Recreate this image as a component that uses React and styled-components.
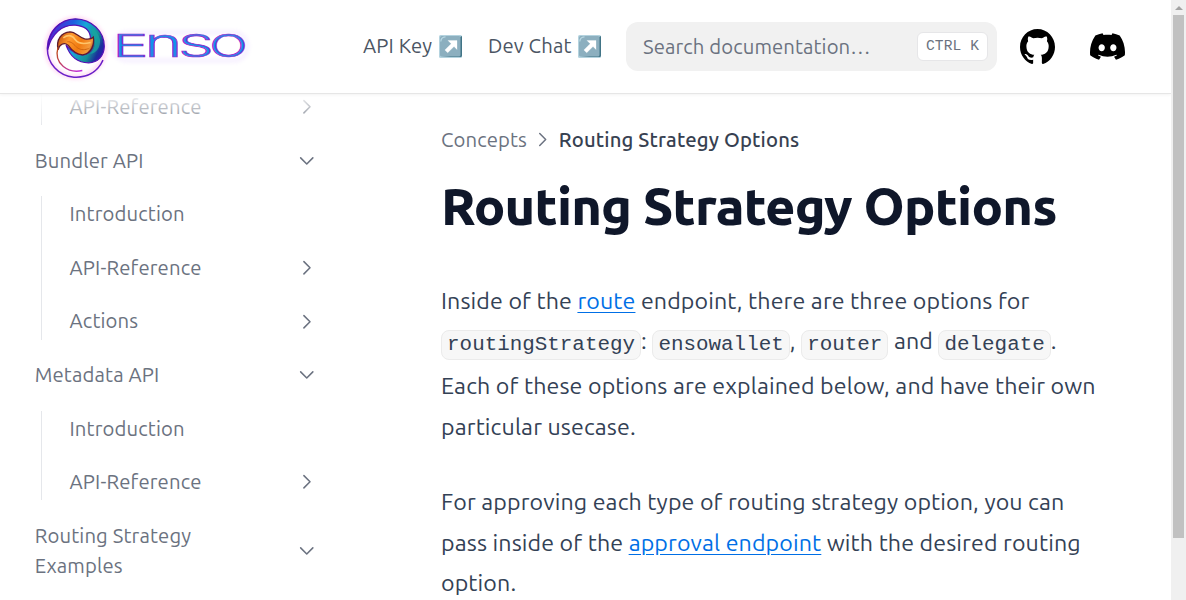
import React from "react";
import styled, { createGlobalStyle } from "styled-components";

const Global = createGlobalStyle`
  *, *::before, *::after { box-sizing: border-box; }
  body { margin: 0; background: #fff; overflow: hidden; font-family: Ubuntu, "Open Sans", "Noto Sans", sans-serif; }
  a { color: inherit; text-decoration: none; }
  p, h1 { margin: 0; }
`;

const Shell = styled.div`
  display: flex;
  width: 100%;
  height: 600px;
  overflow: hidden;
`;
const Page = styled.div`
  flex: 1;
  min-width: 0;
  display: flex;
  flex-direction: column;
`;
const Label = styled.span`
  white-space: nowrap;
`;

/* Header */
const Header = styled.header`
  flex: none;
  height: 93px;
  display: flex;
  align-items: center;
  padding-left: 34px;
  background: #fff;
  box-shadow: 0 1px 0 #e6e6e6, 0 2px 3px rgba(0, 0, 0, 0.05);
  z-index: 2;
`;
const LogoLink = styled.a`
  display: flex;
  width: 226px;
  margin-right: 103px;
`;
const NavLink = styled.a`
  display: flex;
  align-items: center;
  justify-content: space-between;
  width: ${(p) => p.$width}px;
  margin-right: ${(p) => p.$after}px;
  padding-bottom: 1px;
  font-size: 20.3px;
  letter-spacing: 0.14px;
  line-height: 30px;
  color: #4b5563;
  svg { flex: none; }
`;
const Search = styled.div`
  display: flex;
  align-items: center;
  justify-content: space-between;
  width: 371px;
  height: 49px;
  padding: 0 9px 0 17px;
  border-radius: 12px;
  background: #f1f1f1;
  color: #6b7280;
  font-size: 20.3px;
  letter-spacing: 0.1px;
`;
const Kbd = styled.kbd`
  display: flex;
  align-items: center;
  justify-content: center;
  width: 71px;
  height: 29px;
  padding-bottom: 2px;
  border: 1px solid #e6e6e8;
  border-radius: 6px;
  background: #fff;
  font: 500 14.6px "Liberation Mono", monospace;
  white-space: pre;
`;
const IconLink = styled.a`
  display: flex;
  margin-left: ${(p) => p.$before}px;
  color: #000;
`;

/* Sidebar */
const Body = styled.div`
  flex: 1;
  min-height: 0;
  display: flex;
  overflow: hidden;
`;
const Sidebar = styled.aside`
  position: relative;
  flex: none;
  width: 371px;
  padding: 0 47px 0 23.2px;
  color: #6b7280;
  font-size: 20.3px;
  letter-spacing: 0.15px;
  line-height: 30px;
  &::before {
    content: "";
    position: absolute;
    z-index: 1;
    inset: 0 0 auto 0;
    height: 34px;
    background: linear-gradient(#fff, rgba(255, 255, 255, 0));
  }
`;
const Menu = styled.ul`
  list-style: none;
  margin: -15.7px 0 0;
  padding: 0;
  display: flex;
  flex-direction: column;
  gap: 5.85px;
`;
const SubMenu = styled(Menu)`
  position: relative;
  margin: 5.85px 0 0 17.5px;
  padding-left: 17.3px;
  &::before {
    content: "";
    position: absolute;
    left: 0;
    top: 5.85px;
    bottom: 5.7px;
    width: 1px;
    background: #e5e7eb;
  }
`;
const Row = styled.div`
  display: flex;
  align-items: center;
  justify-content: space-between;
  padding: 8.88px 8px 8.88px 11.5px;
`;

/* Article */
const Article = styled.main`
  flex: 1;
  min-width: 0;
  padding: 31px 0 0 70px;
  color: #334155;
  font-size: 23.2px;
  letter-spacing: 0.12px;
`;
const Crumbs = styled.nav`
  display: flex;
  align-items: center;
  height: 30px;
  font-size: 20.3px;
  color: #6b7280;
  svg { margin: 0 6.4px; }
  strong { font-weight: 500; letter-spacing: 0.17px; color: #374151; }
`;
const Title = styled.h1`
  margin-top: 18px;
  font-size: 52.2px;
  line-height: 68px;
  letter-spacing: -0.8px;
  font-weight: 800;
  color: #0f172a;
`;
const Paragraph = styled.p`
  margin-top: ${(p) => p.$top}px;
`;
const Line = styled.span`
  display: flex;
  align-items: baseline;
  height: ${(p) => p.$height || 40.6}px;
  line-height: 40.6px;
  white-space: pre;
`;
const Link = styled.a`
  color: #006fe6;
  text-decoration: underline;
  text-decoration-thickness: from-font;
  text-underline-position: from-font;
`;
const Code = styled.code`
  position: relative;
  top: 0.6px;
  height: 30px;
  padding: 0 5.1px;
  border: 1px solid #ebebeb;
  border-radius: 8px;
  background: #f7f7f7;
  font: 20.88px/28px "Liberation Mono", monospace;
  letter-spacing: 0;
`;

/* Scrollbar */
const Scrollbar = styled.div`
  flex: none;
  width: 15px;
  display: flex;
  flex-direction: column;
  align-items: center;
  background: #f0f0f0;
  z-index: 3;
`;
const Arrow = styled.div`
  margin: 6px 0 5px;
  border: 4px solid transparent;
  border-top: 0;
  border-bottom-color: #a3a3a3;
`;
const Thumb = styled.div`
  width: 11px;
  height: 523px;
  background: #c1c1c1;
`;

const Chevron = ({ open, size = 19.5 }) => (
  <svg width={size} height={size} viewBox="0 0 24 24" fill="none" stroke="currentColor" strokeWidth="1.9" strokeLinecap="round" strokeLinejoin="round">
    <path d={open ? "M4.5 8.5l7.5 7.5 7.5-7.5" : "M8.5 4.5l7.5 7.5-7.5 7.5"} />
  </svg>
);

const ArrowTile = () => (
  <svg width="23" height="23" viewBox="0 0 23 23">
    <rect width="23" height="23" rx="1.5" fill="#b4d3df" />
    <path d="M2 22h19.5a1.5 1.5 0 0 0 1.5-1.5V1l-2 1v18z" fill="#417486" />
    <rect x="1" y="1" width="20.5" height="20.5" rx="1.5" fill="#8cafbf" />
    <path d="M1.8 6.5Q2 2 6.5 1.8" stroke="#b9d9e4" strokeWidth="1.2" fill="none" />
    <path d="M9 5.5h9v9l-3-3-6.3 6.3-2.8-2.8 6.3-6.3z" fill="#fff" stroke="#fff" strokeWidth=".3" strokeLinejoin="round" />
  </svg>
);

const Logo = () => (
  <svg width="226" height="72" viewBox="34 10.500 226 72" role="img" aria-label="Enso">
    <defs>
      <linearGradient id="ring" gradientUnits="userSpaceOnUse" x1="30" y1="60" x2="195" y2="140">
        <stop offset="0" stopColor="#5a1fd0" />
        <stop offset=".3" stopColor="#1c5fe0" />
        <stop offset=".5" stopColor="#16a6d8" />
        <stop offset=".75" stopColor="#158f96" />
        <stop offset=".88" stopColor="#1b2f9c" />
        <stop offset="1" stopColor="#3a10b8" />
      </linearGradient>
      <linearGradient id="flame" gradientUnits="userSpaceOnUse" x1="60" y1="70" x2="165" y2="120">
        <stop offset="0" stopColor="#c2500f" />
        <stop offset=".3" stopColor="#ff9a2e" />
        <stop offset=".6" stopColor="#f07a10" />
        <stop offset=".85" stopColor="#f59a3c" />
        <stop offset="1" stopColor="#7a3a20" />
      </linearGradient>
      <linearGradient id="tail" gradientUnits="userSpaceOnUse" x1="60" y1="110" x2="130" y2="175">
        <stop offset="0" stopColor="#c04a18" />
        <stop offset="1" stopColor="#c22be0" />
      </linearGradient>
      <linearGradient id="word" x1="0" y1="0" x2="0" y2="1">
        <stop offset="0" stopColor="#5b6ae0" />
        <stop offset=".5" stopColor="#0d95ea" />
        <stop offset="1" stopColor="#3c7ce4" />
      </linearGradient>
      <filter id="glow" x="-20%" y="-40%" width="140%" height="180%">
        <feGaussianBlur stdDeviation="2.2" />
      </filter>
    </defs>
    <circle cx="75.700" cy="47.500" r="29" fill="none" stroke="#ff6ad0" strokeWidth="3" opacity=".4" filter="url(#glow)" />
    <g transform="translate(38 12) scale(.3333)">
      <path d="M195 143C178 180 145 196 108 194C60 190 28 152 28 107C28 80 42 50 66 34" fill="none" stroke="#6a1fc8" strokeWidth="4.500" />
      <path d="M29 112C30 55 66 20 112 19C162 20 199 58 199 102C198 130 180 150 152 151C120 151 96 132 84 98C100 116 118 128 134 127C156 124 168 108 164 90C158 86 156 82 157 72C154 50 134 40 112 38C72 36 40 64 29 112Z" fill="url(#ring)" stroke="#5510b4" strokeWidth="3.500" />
      <path d="M162 62C176 84 174 106 156 124C176 122 188 104 186 80C180 62 172 50 160 44Z" fill="#18a5a0" opacity=".75" />
      <path d="M60 112C54 80 70 60 96 58C114 58 120 74 140 79C152 81 160 80 166 74C170 96 160 124 134 127C112 126 100 112 90 98C78 88 64 96 60 112Z" fill="url(#flame)" stroke="#5e1c30" strokeWidth="4" />
      <path d="M76 76C92 64 106 70 112 82C122 96 142 94 158 90" fill="none" stroke="#ffc469" strokeWidth="5" />
      <path d="M88 88C100 86 108 96 118 106C130 114 142 112 152 108" fill="none" stroke="#d0640f" strokeWidth="3" />
      <path d="M60 104C54 126 58 148 76 162C92 175 112 179 133 174" fill="none" stroke="url(#tail)" strokeWidth="4" />
    </g>
    <rect x="114" y="32" width="133" height="28" rx="13" fill="none" stroke="#b57cff" strokeWidth="3" opacity=".16" filter="url(#glow)" />
    <g fontFamily="Inter, sans-serif" fontWeight="300" fill="url(#word)" stroke="#9a22cc" strokeWidth=".7">
      <text x="112.500" y="56.500" fontSize="30.500" textLength="36" lengthAdjust="spacingAndGlyphs">E</text>
      <text x="144.500" y="56.500" fontSize="40" textLength="38" lengthAdjust="spacingAndGlyphs">n</text>
      <text x="178.500" y="56.500" fontSize="30.500" textLength="35" lengthAdjust="spacingAndGlyphs">S</text>
      <text x="209.500" y="56.500" fontSize="30.500" textLength="38" lengthAdjust="spacingAndGlyphs">O</text>
    </g>
  </svg>
);

const Github = () => (
  <svg width="35" height="35" viewBox="3 3 18 18" fill="currentColor">
    <path d="M12 3C7.0275 3 3 7.12937 3 12.2276C3 16.3109 5.57625 19.7597 9.15374 20.9824C9.60374 21.0631 9.77249 20.7863 9.77249 20.5441C9.77249 20.3249 9.76125 19.5982 9.76125 18.8254C7.5 19.2522 6.915 18.2602 6.735 17.7412C6.63375 17.4759 6.19499 16.6569 5.8125 16.4378C5.4975 16.2647 5.0475 15.838 5.80124 15.8264C6.51 15.8149 7.01625 16.4954 7.18499 16.7723C7.99499 18.1679 9.28875 17.7758 9.80625 17.5335C9.885 16.9337 10.1212 16.53 10.38 16.2993C8.3775 16.0687 6.285 15.2728 6.285 11.7432C6.285 10.7397 6.63375 9.9092 7.20749 9.26326C7.1175 9.03257 6.8025 8.08674 7.2975 6.81794C7.2975 6.81794 8.05125 6.57571 9.77249 7.76377C10.4925 7.55615 11.2575 7.45234 12.0225 7.45234C12.7875 7.45234 13.5525 7.55615 14.2725 7.76377C15.9937 6.56418 16.7475 6.81794 16.7475 6.81794C17.2424 8.08674 16.9275 9.03257 16.8375 9.26326C17.4113 9.9092 17.76 10.7281 17.76 11.7432C17.76 15.2843 15.6563 16.0687 13.6537 16.2993C13.98 16.5877 14.2613 17.1414 14.2613 18.0065C14.2613 19.2407 14.25 20.2326 14.25 20.5441C14.25 20.7863 14.4188 21.0746 14.8688 20.9824C16.6554 20.364 18.2079 19.1866 19.3078 17.6162C20.4077 16.0457 20.9995 14.1611 21 12.2276C21 7.12937 16.9725 3 12 3Z" />
  </svg>
);

const Discord = () => (
  <svg width="35" height="35" viewBox="0 5 30.67 23.25" fill="currentColor">
    <path d="M26.0015 6.9529C24.0021 6.03845 21.8787 5.37198 19.6623 5C19.3833 5.48048 19.0733 6.13144 18.8563 6.64292C16.4989 6.30193 14.1585 6.30193 11.8336 6.64292C11.6166 6.13144 11.2911 5.48048 11.0276 5C8.79575 5.37198 6.67235 6.03845 4.6869 6.9529C0.672601 12.8736 -0.41235 18.6548 0.130124 24.3585C2.79599 26.2959 5.36889 27.4739 7.89682 28.2489C8.51679 27.4119 9.07477 26.5129 9.55525 25.5675C8.64079 25.2265 7.77283 24.808 6.93587 24.312C7.15286 24.1571 7.36986 23.9866 7.57135 23.8161C12.6241 26.1255 18.0969 26.1255 23.0876 23.8161C23.3046 23.9866 23.5061 24.1571 23.7231 24.312C22.8861 24.808 22.0182 25.2265 21.1037 25.5675C21.5842 26.5129 22.1422 27.4119 22.7621 28.2489C25.2885 27.4739 27.8769 26.2959 30.5288 24.3585C31.1952 17.7559 29.4733 12.0212 26.0015 6.9529ZM10.2527 20.8402C8.73376 20.8402 7.49382 19.4608 7.49382 17.7714C7.49382 16.082 8.70276 14.7025 10.2527 14.7025C11.7871 14.7025 13.0425 16.082 13.0115 17.7714C13.0115 19.4608 11.7871 20.8402 10.2527 20.8402ZM20.4373 20.8402C18.9183 20.8402 17.6768 19.4608 17.6768 17.7714C17.6768 16.082 18.8873 14.7025 20.4373 14.7025C21.9717 14.7025 23.2271 16.082 23.1961 17.7714C23.1961 19.4608 21.9872 20.8402 20.4373 20.8402Z" />
  </svg>
);

const Item = ({ children, chevron }) => (
  <Row>
    <Label>{children}</Label>
    {chevron && <Chevron open={chevron === "down"} />}
  </Row>
);

export default function App() {
  return (
    <Shell>
      <Global />
      <Page>
        <Header>
          <LogoLink href="#"><Logo /></LogoLink>
          <NavLink href="#" $width={99} $after={26}><Label>API Key</Label><ArrowTile /></NavLink>
          <NavLink href="#" $width={113} $after={25}><Label>Dev Chat</Label><ArrowTile /></NavLink>
          <Search><Label>Search documentation…</Label><Kbd>CTRL K</Kbd></Search>
          <IconLink href="#" $before={23}><Github /></IconLink>
          <IconLink href="#" $before={35}><Discord /></IconLink>
        </Header>
        <Body>
          <Sidebar>
            <Menu>
              <li>
                <SubMenu>
                  <li><Item chevron="right">API-Reference</Item></li>
                </SubMenu>
              </li>
              <li>
                <Item chevron="down">Bundler API</Item>
                <SubMenu>
                  <li><Item>Introduction</Item></li>
                  <li><Item chevron="right">API-Reference</Item></li>
                  <li><Item chevron="right">Actions</Item></li>
                </SubMenu>
              </li>
              <li>
                <Item chevron="down">Metadata API</Item>
                <SubMenu>
                  <li><Item>Introduction</Item></li>
                  <li><Item chevron="right">API-Reference</Item></li>
                </SubMenu>
              </li>
              <li><Item chevron="down">Routing Strategy<br />Examples</Item></li>
            </Menu>
          </Sidebar>
          <Article>
            <Crumbs>
              <span>Concepts</span>
              <Chevron size={19} />
              <strong>Routing Strategy Options</strong>
            </Crumbs>
            <Title>Routing Strategy Options</Title>
            <Paragraph $top={40}>
              <Line $height={40.2}>
                <span>Inside of the </span>
                <Link href="#">route</Link>
                <span> endpoint, there are three options for</span>
              </Line>
              <Line $height={45.2}>
                <Code>routingStrategy</Code><span>: </span>
                <Code>ensowallet</Code><span>, </span>
                <Code>router</Code><span> and </span>
                <Code>delegate</Code><span>.</span>
              </Line>
              <Line>Each of these options are explained below, and have their own</Line>
              <Line>particular usecase.</Line>
            </Paragraph>
            <Paragraph $top={34.4}>
              <Line $height={40.8}>For approving each type of routing strategy option, you can</Line>
              <Line $height={40.2}>
                <span>pass inside of the </span>
                <Link href="#">approval endpoint</Link>
                <span> with the desired routing</span>
              </Line>
              <Line>option.</Line>
            </Paragraph>
          </Article>
        </Body>
      </Page>
      <Scrollbar><Arrow /><Thumb /></Scrollbar>
    </Shell>
  );
}
